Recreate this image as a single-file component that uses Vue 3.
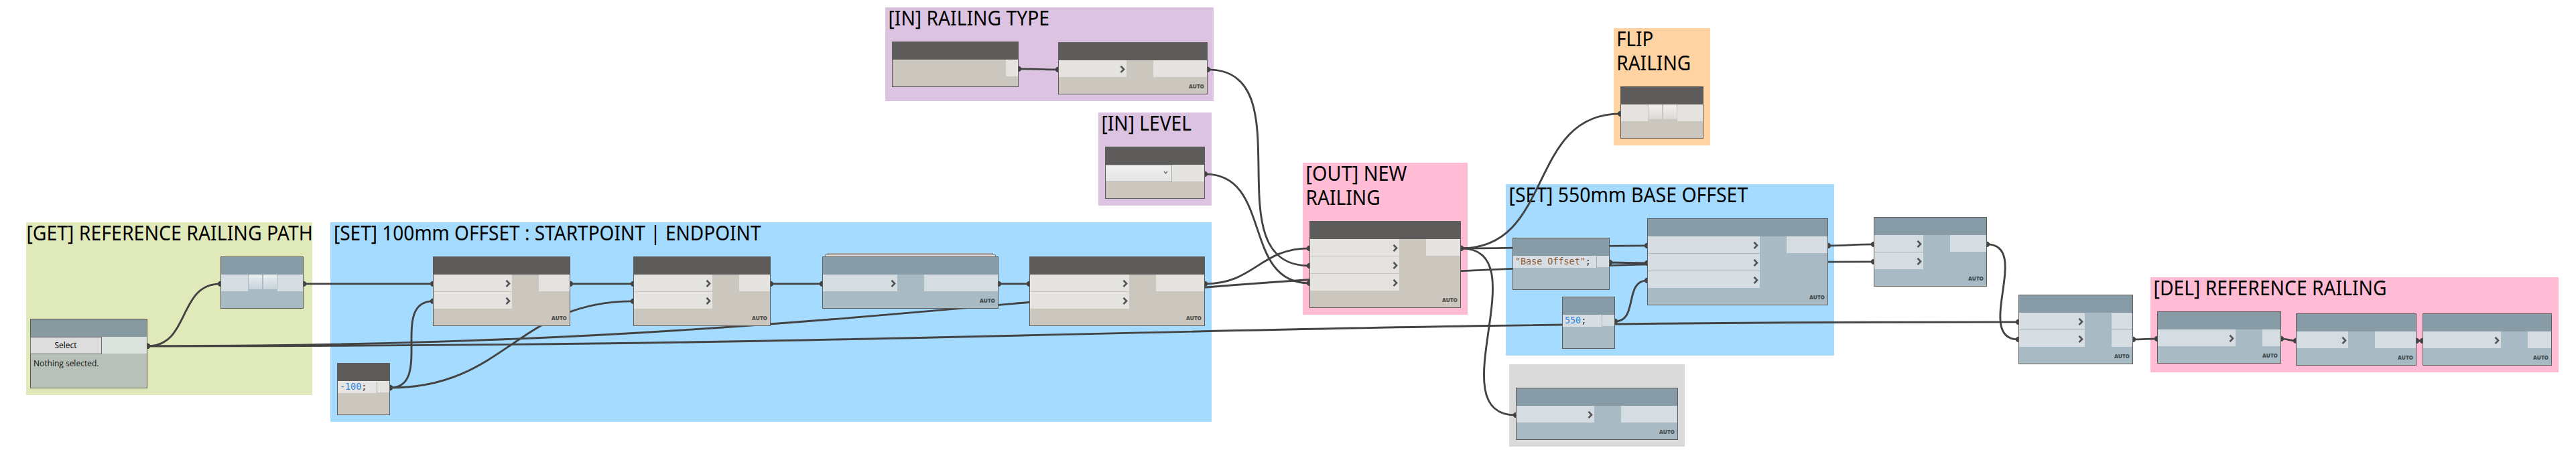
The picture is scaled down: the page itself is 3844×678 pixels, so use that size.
<script setup>
// Coloured groups with their captions; each caption line has a start, a baseline and a length.
const groups = [
  { tone: 'green', x: 39, y: 332, w: 427, h: 258, lines: [{ t: '[GET] REFERENCE RAILING PATH', x: 39.4, y: 359.2, len: 427.5 }] },
  { tone: 'blue', x: 493, y: 332, w: 1315, h: 298, lines: [{ t: '[SET] 100mm OFFSET : STARTPOINT | ENDPOINT', x: 498, y: 359.2, len: 637.5 }] },
  { tone: 'purple', x: 1321, y: 11, w: 490, h: 140, lines: [{ t: '[IN] RAILING TYPE', x: 1325.5, y: 38.2, len: 240.5 }] },
  { tone: 'purple', x: 1639, y: 168, w: 169, h: 139, lines: [{ t: '[IN] LEVEL', x: 1643.5, y: 195.2, len: 134.4 }] },
  { tone: 'pink', x: 1944, y: 243, w: 246, h: 227, lines: [{ t: '[OUT] NEW', x: 1948.6, y: 270.2, len: 150.8 }, { t: 'RAILING', x: 1948.6, y: 306.2, len: 111 }] },
  { tone: 'orange', x: 2408, y: 42, w: 144, h: 175, lines: [{ t: 'FLIP', x: 2412.2, y: 69.2, len: 55 }, { t: 'RAILING', x: 2412.2, y: 105.2, len: 111 }] },
  { tone: 'blue', x: 2247, y: 275, w: 490, h: 256, lines: [{ t: '[SET] 550mm BASE OFFSET', x: 2251.6, y: 302.2, len: 356.6 }] },
  { tone: 'gray', x: 2252, y: 544, w: 262, h: 123, lines: [] },
  { tone: 'pink', x: 3209, y: 414, w: 609, h: 142, lines: [{ t: '[DEL] REFERENCE RAILING', x: 3213.6, y: 441.2, len: 348 }] },
]

// inW / outW: widths of the port columns, ins / outs: number of ports.
const nodes = [
  { id: 'pick', kind: 'select', tone: 'sage', x: 45, y: 476, w: 175, h: 104, outW: 67, outs: 1 },
  { id: 'listA', kind: 'plusminus', tone: 'frozen', x: 329, y: 383, w: 124, h: 78, inW: 40, outW: 38, ins: 1, outs: 1 },
  { id: 'start', tone: 'live', x: 646, y: 383, w: 205, h: 104, inW: 117, ins: 2, outW: 46, outs: 1, auto: true },
  { id: 'minus', kind: 'code', tone: 'live', x: 503, y: 542, w: 79, h: 78, code: '-100', outW: 18, cls: 'num' },
  { id: 'end', tone: 'live', x: 945, y: 383, w: 205, h: 104, inW: 117, ins: 2, outW: 46, outs: 1, auto: true },
  { id: 'join', tone: 'frozen', x: 1227, y: 383, w: 263, h: 78, inW: 111, ins: 1, outW: 110, outs: 1, auto: true, stacked: true },
  { id: 'path', tone: 'live', x: 1536, y: 383, w: 262, h: 104, inW: 148, ins: 2, outW: 72, outs: 1, auto: true },
  { id: 'type', tone: 'live', x: 1331, y: 62, w: 189, h: 68, inW: 0, ins: 0, outW: 18, outs: 1 },
  { id: 'typeOut', tone: 'live', x: 1579, y: 63, w: 223, h: 78, inW: 101, ins: 1, outW: 80, outs: 1, auto: true },
  { id: 'level', kind: 'combo', tone: 'live', x: 1649, y: 219, w: 149, h: 78, outW: 48, outs: 1 },
  { id: 'railing', tone: 'live', x: 1954, y: 330, w: 226, h: 130, inW: 133, ins: 3, outW: 51, outs: 1, auto: true },
  { id: 'flip', kind: 'plusminus', tone: 'live', x: 2418, y: 129, w: 124, h: 78, inW: 40, outW: 38, ins: 1, outs: 1 },
  { id: 'base', kind: 'code', tone: 'frozen', x: 2257, y: 355, w: 145, h: 78, code: '"Base Offset"', outW: 18, cls: 'str' },
  { id: 'height', kind: 'code', tone: 'frozen', x: 2331, y: 443, w: 79, h: 78, code: '550', outW: 18, cls: 'num' },
  { id: 'param', tone: 'frozen', x: 2458, y: 326, w: 270, h: 130, inW: 167, ins: 3, outW: 61, outs: 1, auto: true },
  { id: 'watch', tone: 'frozen', x: 2262, y: 579, w: 242, h: 78, inW: 116, ins: 1, outW: 84, outs: 1, auto: true },
  { id: 'pass', tone: 'frozen', x: 2796, y: 324, w: 169, h: 104, inW: 73, ins: 2, outW: 54, outs: 1, auto: true },
  { id: 'wait', tone: 'frozen', x: 3012, y: 440, w: 171, h: 104, inW: 98, ins: 2, outW: 31, outs: 2, auto: true },
  { id: 'del1', tone: 'frozen', x: 3219, y: 465, w: 185, h: 78, inW: 116, ins: 1, outW: 27, outs: 1, auto: true },
  { id: 'del2', tone: 'frozen', x: 3426, y: 468, w: 180, h: 78, inW: 77, ins: 1, outW: 61, outs: 1, auto: true },
  { id: 'del3', tone: 'frozen', x: 3615, y: 468, w: 193, h: 78, inW: 116, ins: 1, outW: 35, outs: 1, auto: true },
]

const links = [
  ['pick', 0, 'listA', 0], ['pick', 0, 'pass', 1], ['pick', 0, 'wait', 0],
  ['listA', 0, 'start', 0], ['minus', 0, 'start', 1], ['minus', 0, 'end', 1],
  ['start', 0, 'end', 0], ['end', 0, 'join', 0], ['join', 0, 'path', 0],
  ['path', 0, 'railing', 0], ['type', 0, 'typeOut', 0], ['typeOut', 0, 'railing', 1],
  ['level', 0, 'railing', 2], ['railing', 0, 'flip', 0], ['railing', 0, 'param', 0],
  ['railing', 0, 'watch', 0], ['base', 0, 'param', 1], ['height', 0, 'param', 2],
  ['param', 0, 'pass', 0], ['pass', 0, 'wait', 1], ['wait', 1, 'del1', 0],
  ['del1', 0, 'del2', 0], ['del2', 0, 'del3', 0],
]

const byId = Object.fromEntries(nodes.map((n) => [n.id, n]))
const portY = (n, i) => n.y + 27 + (n.kind === 'code' ? 10 : 13.9) + i * 26

const wires = links.map(([from, o, to, i]) => {
  const a = byId[from]
  const b = byId[to]
  const x1 = a.x + a.w
  const y1 = portY(a, o)
  const x2 = b.x
  const y2 = portY(b, i)
  const k = 0.45 * Math.hypot(x2 - x1, y2 - y1)
  return { x1, y1, x2, y2, d: `M${x1} ${y1}C${x1 + k} ${y1} ${x2 - k} ${y2} ${x2} ${y2}` }
})

const box = (r) => ({ left: r.x + 'px', top: r.y + 'px', width: r.w + 'px', height: r.h + 'px' })
</script>

<template>
  <main class="canvas">
    <section v-for="(g, i) in groups" :key="'g' + i" class="group" :class="g.tone" :style="box(g)"></section>

    <svg class="layer" width="3844" height="678" viewBox="0 0 3844 678">
      <template v-for="(g, i) in groups" :key="'c' + i">
        <text
          v-for="l in g.lines" :key="l.t" class="caption"
          :x="l.x" :y="l.y" :textLength="l.len" lengthAdjust="spacingAndGlyphs"
        >{{ l.t }}</text>
      </template>
      <g v-for="(w, i) in wires" :key="'w' + i">
        <path class="wire" :d="w.d" />
        <circle class="dot" :cx="w.x1" :cy="w.y1" r="4.2" />
        <circle class="dot" :cx="w.x2" :cy="w.y2" r="4.2" />
      </g>
    </svg>

    <article v-for="n in nodes" :key="n.id" class="node" :class="[n.tone, { stacked: n.stacked }]" :style="box(n)">
      <header class="head"></header>
      <div class="body">
        <button v-if="n.kind === 'select'" class="select">Select</button>
        <div v-else-if="n.kind === 'combo'" class="combo">
          <svg width="7" height="6" viewBox="0 0 7 6"><path d="M1 1L3.5 4L6 1" /></svg>
        </div>
        <div v-else-if="n.kind === 'code'" class="code"><span :class="n.cls">{{ n.code }}</span>;</div>
        <template v-else>
          <div class="ports" :style="{ width: n.inW + 'px' }">
            <div v-for="p in n.ins" :key="p" class="port">
              <svg v-if="n.kind !== 'plusminus'" class="chev" width="9" height="13" viewBox="0 0 9 13">
                <path d="M1.5 1.7L6 6.4L1.5 11.1" />
              </svg>
            </div>
          </div>
          <div v-if="n.kind === 'plusminus'" class="pair"><i></i><i></i></div>
        </template>
        <div class="ports outs" :style="{ width: n.outW + 'px' }">
          <div v-for="p in n.outs || 1" :key="p" class="port" :class="{ short: n.kind === 'code' }"></div>
        </div>
      </div>
      <p v-if="n.kind === 'select'" class="note">Nothing selected.</p>
      <span v-if="n.auto" class="auto">AUTO</span>
    </article>
  </main>
</template>

<style scoped>
.canvas {
  position: relative;
  width: 3844px;
  height: 678px;
  overflow: hidden;
  background: #fff;
  font-family: "Open Sans", "Noto Sans", sans-serif;
}
.group { position: absolute; }
.green { background: #e0e9ba; }
.blue { background: #a4dbff; }
.purple { background: #dcc3e1; }
.pink { background: #ffbcd4; }
.orange { background: #ffd3a2; }
.gray { background: #dadada; }

.layer { position: absolute; left: 0; top: 0; }
.caption { font: 30px "Noto Sans", "Open Sans", sans-serif; fill: #000; }
.wire { fill: none; stroke: #434343; stroke-width: 2.9; }
.dot { fill: #434343; }

.node {
  --head: #5d5c5a;
  --fill: #cbc6be;
  --port: #e4e3df;
  --field: #e6e5e3;
  --ink: #504f4b;
  position: absolute;
  box-sizing: border-box;
  display: flex;
  flex-direction: column;
  border: 1px solid #5d5c5a;
  background: var(--fill);
}
.frozen {
  --head: #879ca7;
  --fill: #a8bbc4;
  --port: #d5dde3;
  --field: #d7dee3;
  --ink: #414d52;
}
.sage {
  --head: #879a9f;
  --fill: #b7c1b9;
  --port: #dbe1dd;
  border-color: #5d5846;
}
.head { height: 26px; flex: none; background: var(--head); }
.body { display: flex; align-items: flex-start; }
.ports { display: flex; flex-direction: column; gap: 1px; flex: none; }
.outs { margin-left: auto; }
.port {
  height: 25px;
  display: flex;
  align-items: center;
  justify-content: flex-end;
  background: var(--port);
}
.port.short { height: 17px; }
.chev { margin: 1px 1px 0 0; }
.chev path { fill: none; stroke: #555; stroke-width: 2.7; }

.pair { display: flex; gap: 2px; margin-left: 1px; }
.pair i { width: 20px; height: 22px; background: linear-gradient(#f2f1f0, #dbd9d5); }
.frozen .pair i { background: linear-gradient(#eaeff1, #c7d3da); }

.select {
  box-sizing: border-box;
  width: 107px;
  height: 26px;
  margin: 0 -1px -1px -1px;
  padding: 0 1px 0 0;
  border: 1px solid #707070;
  background: #dddddd;
  color: #000;
  font: 12px/24px "Open Sans", sans-serif;
}
.note { margin: 6px 0 0 4px; font-size: 12px; line-height: 18px; color: #111; white-space: nowrap; }

.combo {
  box-sizing: border-box;
  flex: 1;
  height: 26px;
  display: flex;
  justify-content: flex-end;
  padding: 8px 5px 0 0;
  border: 1px solid #acacac;
  border-left: 0;
  background: linear-gradient(#f0f0f0, #e5e5e5);
}
.combo path { fill: none; stroke: #606060; stroke-width: 1.3; }

.code {
  flex: 1;
  box-sizing: border-box;
  height: 18px;
  padding-left: 3px;
  border-right: 1px solid #abadb3;
  background: var(--field);
  color: #333;
  font: 13.4px/18px "DejaVu Sans Mono", monospace;
  white-space: nowrap;
}
.num { color: #2585e5; }
.str { color: #8f5a34; }

.auto {
  margin: auto 4px 6px auto;
  font-size: 8px;
  font-weight: 800;
  line-height: 11px;
  color: var(--ink);
}

.stacked::before,
.stacked::after {
  content: "";
  position: absolute;
  box-sizing: border-box;
  border: 1px solid #8b8886;
  border-bottom: 0;
  background: #dcd8d6;
}
.stacked::before { left: 7px; right: 7px; top: -6px; height: 2px; border-color: #a29f9f; }
.stacked::after { left: 3px; right: 3px; top: -4px; height: 3px; }
</style>
